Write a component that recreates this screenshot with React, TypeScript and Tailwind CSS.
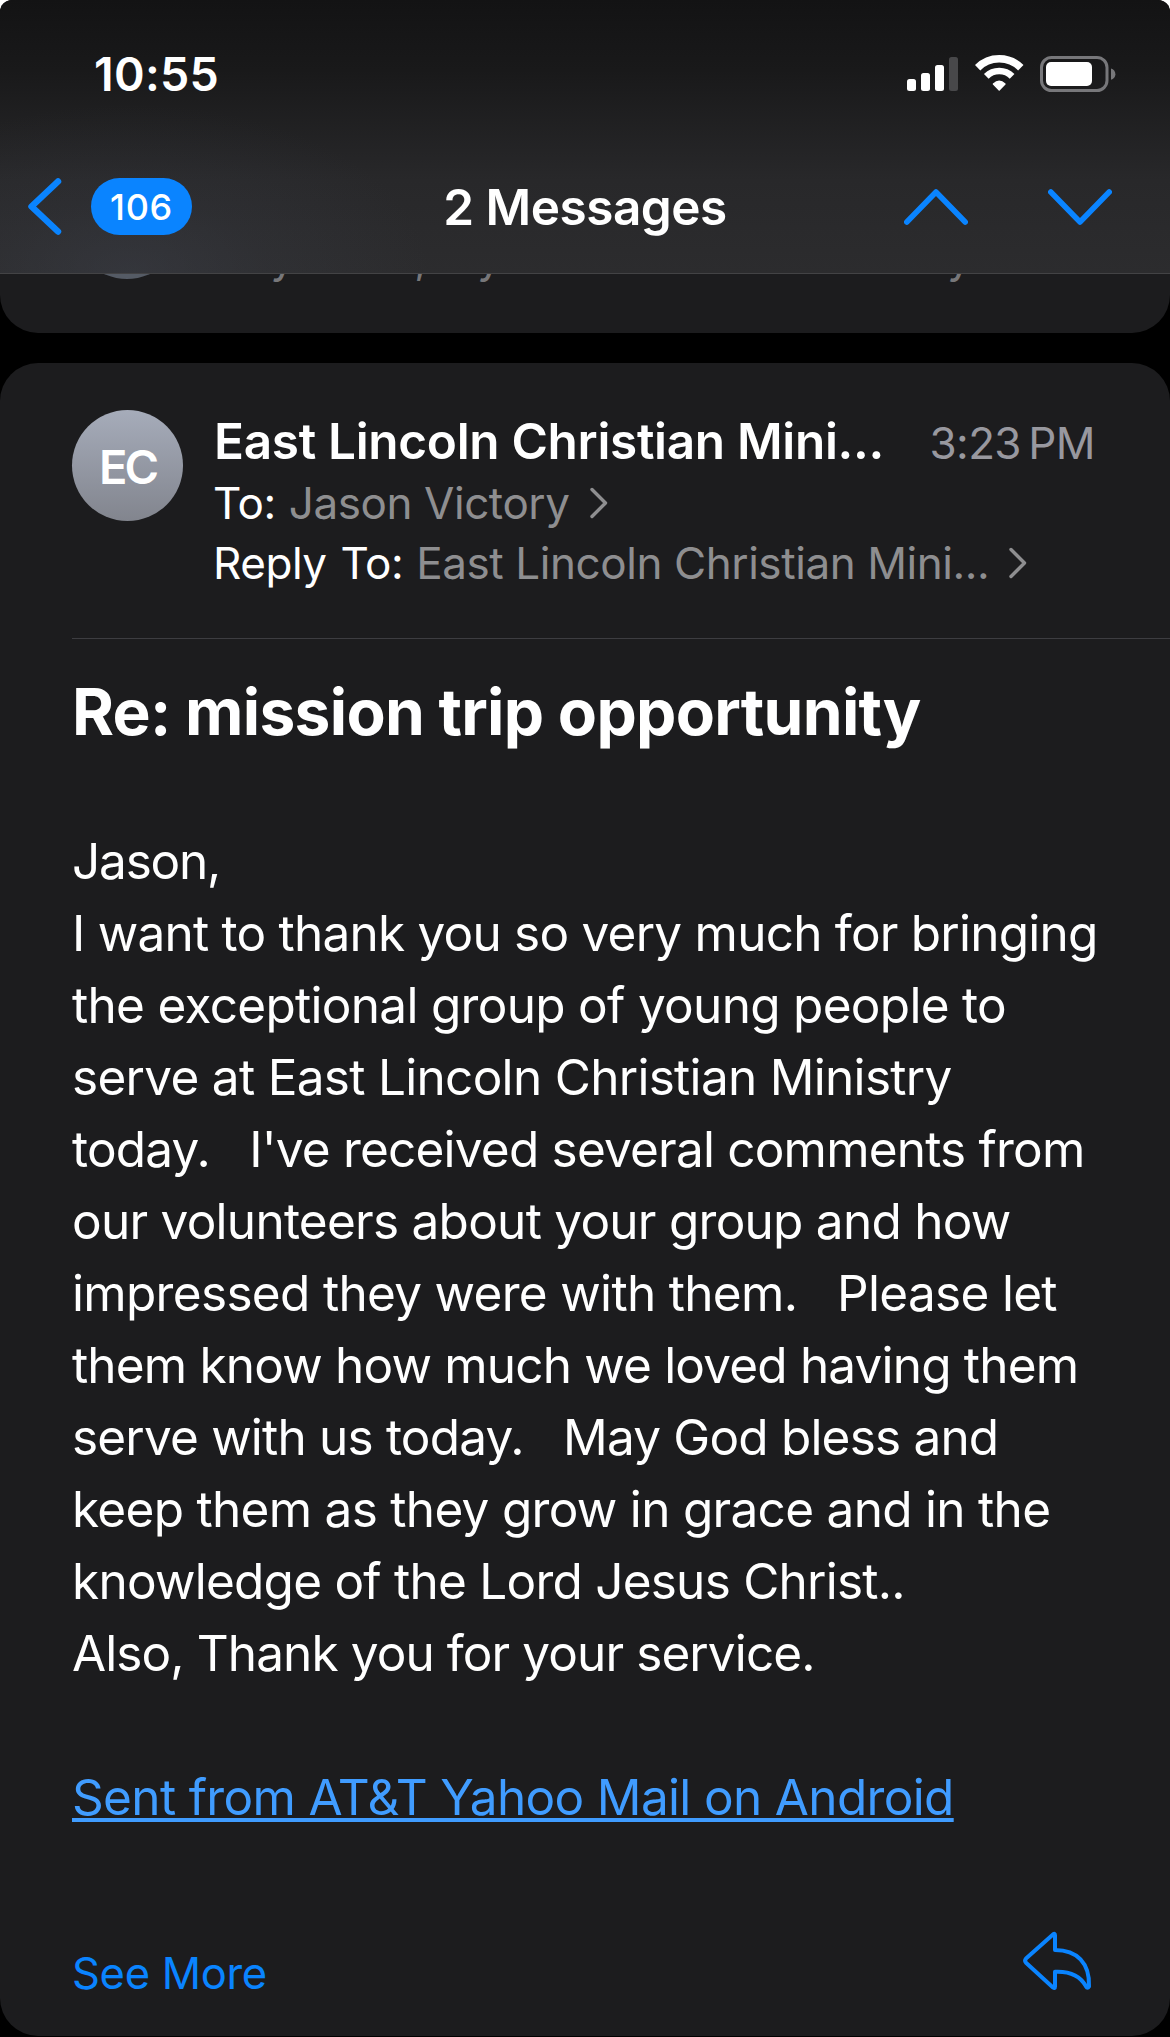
import type { ReactNode } from 'react';

const nbsp = '\u00a0\u00a0';

const bodyLines = [
  { text: 'Jason,', tracking: 'tracking-[-1.2px]' },
  { text: 'I want to thank you so very much for bringing', tracking: 'tracking-[-0.77px]' },
  { text: 'the exceptional group of young people to', tracking: 'tracking-[-0.7px]' },
  { text: 'serve at East Lincoln Christian Ministry', tracking: 'tracking-[-0.7px]' },
  { text: `today.${nbsp} I've received several comments from`, tracking: 'tracking-[-0.8px]' },
  { text: 'our volunteers about your group and how', tracking: 'tracking-[-0.74px]' },
  { text: `impressed they were with them.${nbsp} Please let`, tracking: 'tracking-[-0.68px]' },
  { text: 'them know how much we loved having them', tracking: 'tracking-[-0.82px]' },
  { text: `serve with us today.${nbsp} May God bless and`, tracking: 'tracking-[-0.81px]' },
  { text: 'keep them as they grow in grace and in the', tracking: 'tracking-[-0.7px]' },
  { text: 'knowledge of the Lord Jesus Christ..', tracking: 'tracking-[-0.76px]' },
  { text: 'Also, Thank you for your service.', tracking: 'tracking-[-0.9px]' },
];

function SignalIcon() {
  return (
    <svg width="51" height="48" viewBox="0 0 51 48" fill="#fff">
      <rect x="0" y="29" width="9" height="12" rx="2.5" />
      <rect x="14" y="23" width="9" height="18" rx="2.5" />
      <rect x="28" y="15" width="9" height="26" rx="2.5" />
      <rect x="42" y="7" width="9" height="34" rx="2.5" fill="#48484a" />
    </svg>
  );
}

function WifiIcon() {
  return (
    <svg width="49" height="48" viewBox="0 0 49 48" fill="none" stroke="#fff">
      <path d="M2.6 17.7A30.5 30.5 0 0 1 45.8 17.7" strokeWidth="7.6" />
      <path d="M11.3 26.4A18.2 18.2 0 0 1 37.1 26.4" strokeWidth="6.6" />
      <path d="M18.4 34Q24.2 28.6 30 34L24.2 40Z" fill="#fff" strokeWidth="1.4" strokeLinejoin="round" />
    </svg>
  );
}

function BatteryIcon() {
  return (
    <svg width="76" height="48" viewBox="0 0 76 48">
      <rect x="1.5" y="7.5" width="65.5" height="33" rx="10" fill="none" stroke="#77777a" strokeWidth="3" />
      <rect x="6" y="12" width="46" height="24" rx="5" fill="#fff" />
      <path d="M71 18.5C73.6 19.3 75.4 21.4 75.4 24.2S73.6 29 71 29.8Z" fill="#77777a" />
    </svg>
  );
}

function ReplyIcon() {
  return (
    <svg
      width="74"
      height="62"
      viewBox="0 0 74 62"
      fill="none"
      stroke="#0a84ff"
      strokeWidth="4"
      strokeLinecap="round"
      strokeLinejoin="round"
    >
      <path d="M33 4.4L6 28.6Q4.2 30.7 6 32.8L33 57.4Q35 58.8 35 56.4V41.7C51 41 60.5 46 66 56.4Q67.5 59 69 56.4C69.8 33 57 20 35 20V5.2Q35 3 33 4.4Z" />
    </svg>
  );
}

function ChevronRight() {
  return (
    <svg
      className="ml-5"
      width="18"
      height="32"
      viewBox="0 0 18 32"
      fill="none"
      stroke="#8e8e90"
      strokeWidth="3.4"
      strokeLinecap="round"
      strokeLinejoin="round"
    >
      <path d="M2 2.5L15.5 16L2 29.5" />
    </svg>
  );
}

function StatusBar() {
  return (
    <div className="flex h-[148px] items-center justify-between pl-[94px] pr-[54px]">
      <span className="pt-0.5 text-[46.5px] font-semibold tracking-[0.3px]">10:55</span>
      <div className="flex items-center">
        <SignalIcon />
        <span className="w-[17px]" />
        <WifiIcon />
        <span className="w-4" />
        <BatteryIcon />
      </div>
    </div>
  );
}

function NavBar() {
  return (
    <div className="grid h-[118px] grid-cols-[1fr_auto_1fr] items-center">
      <div className="flex items-center pb-px pl-[27px]">
        <svg
          width="36"
          height="60"
          viewBox="0 0 36 60"
          fill="none"
          stroke="#0a84ff"
          strokeWidth="6.5"
          strokeLinecap="round"
          strokeLinejoin="round"
        >
          <path d="M31 4.5L4.500 29.500L31 54.500" />
        </svg>
        <span className="ml-7 flex h-[57px] w-[101px] items-center justify-center rounded-full bg-[#0a84ff] text-[36px] font-medium tracking-[0.7px]">
          106
        </span>
      </div>
      <h1 className="text-[49.5px] font-semibold tracking-[-0.48px]">2 Messages</h1>
      <div className="flex items-center justify-end gap-20 pr-[58px]">
        <svg
          width="64"
          height="36"
          viewBox="0 0 64 36"
          fill="none"
          stroke="#0a84ff"
          strokeWidth="5.5"
          strokeLinecap="round"
          strokeLinejoin="round"
        >
          <path d="M2.8 33L32 3L61.2 33" />
        </svg>
        <svg
          width="64"
          height="36"
          viewBox="0 0 64 36"
          fill="none"
          stroke="#0a84ff"
          strokeWidth="5.5"
          strokeLinecap="round"
          strokeLinejoin="round"
        >
          <path d="M2.8 3L32 33L61.2 3" />
        </svg>
      </div>
    </div>
  );
}

// Tail of the collapsed message, scrolled under the header
function PreviousMessage() {
  return (
    <div className="flex h-[59px] items-start overflow-hidden rounded-b-[38px] bg-[#1c1c1e] pl-[72px]">
      <div className="-mt-[105px] size-[110px] shrink-0 rounded-full bg-[#555b65]" />
      <p className="-mt-[45px] ml-[31px] whitespace-nowrap text-[44px] leading-[56px] tracking-[-0.1px] text-[#77777a]">
        Hey there, my name is Jason Victory and
      </p>
    </div>
  );
}

function Recipient({ label, children }: { label: string; children: ReactNode }) {
  return (
    <div className="-ml-px flex h-[60px] items-center whitespace-nowrap text-[44px] leading-[60px]">
      <span className="tracking-[-0.45px] [word-spacing:2px]">{label}</span>
      <span className="ml-[13px] tracking-[-0.42px] text-[#8e8e90]">{children}</span>
      <ChevronRight />
    </div>
  );
}

function Message() {
  return (
    <article className="h-[1673px] rounded-[38px] bg-[#1c1c1e] pl-[72px] pt-[47px]">
      <header className="flex items-start">
        <div className="flex size-[111px] shrink-0 items-center justify-center rounded-full bg-linear-to-b from-[#a6acba] to-[#82858e] pt-1 text-[47px] font-semibold tracking-[-3px]">
          EC
        </div>
        <div className="ml-[31px] flex-1 pt-px">
          <div className="flex items-baseline justify-between pr-[75px] leading-[60px]">
            <h2 className="text-[49.5px] font-semibold tracking-[-0.31px]">East Lincoln Christian Mini...</h2>
            <span className="text-[44px] tracking-[-0.6px] text-[#98989f]">3:23&#8239;PM</span>
          </div>
          <Recipient label="To:">Jason Victory</Recipient>
          <Recipient label="Reply To:">East Lincoln Christian Mini...</Recipient>
        </div>
      </header>

      <div className="mt-[45px] h-px bg-[#3d3d41]" />

      <h3 className="mt-[35px] text-[64px] font-bold leading-[76px] tracking-[-0.7px]">
        Re: mission trip opportunity
      </h3>

      <div className="mt-[75px] whitespace-nowrap text-[49.5px] leading-[72px]">
        {bodyLines.map(({ text, tracking }) => (
          <p key={text} className={tracking}>
            {text}
          </p>
        ))}
        <a
          href="#"
          className="mt-[72px] inline-block tracking-[-0.66px] text-[#409cff] underline decoration-4 underline-offset-[3px]"
        >
          Sent from AT&amp;T Yahoo Mail on Android
        </a>
      </div>

      <footer className="mt-[97px] flex items-start justify-between pr-[76px]">
        <button className="mt-[13px] text-[43.5px] leading-[60px] tracking-[-0.3px] text-[#0a84ff]">See More</button>
        <ReplyIcon />
      </footer>
    </article>
  );
}

export default function App() {
  return (
    <div className="h-[2037px] w-[1170px] bg-white font-['Inter',sans-serif] text-white">
      <div className="h-full overflow-hidden rounded-t-[12px] bg-black">
        <div className="h-[274px] border-b border-[#434345] bg-[radial-gradient(ellipse_300px_170px_at_130px_274px,#43475360,#43475328_45%,#43475300),linear-gradient(to_bottom,#131314_0px,#19191a_70px,#28282a_180px,#2c2c2e_274px)]">
          <StatusBar />
          <NavBar />
        </div>
        <PreviousMessage />
        <div className="h-[30px]" />
        <Message />
      </div>
    </div>
  );
}
